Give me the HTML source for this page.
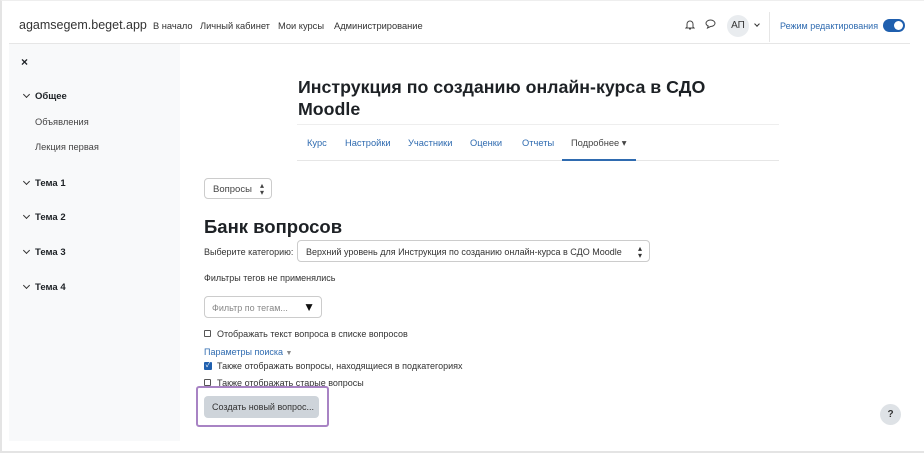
<!DOCTYPE html>
<html><head><meta charset="utf-8">
<style>
*{box-sizing:border-box;margin:0;padding:0}
body{width:924px;height:453px;background:#fff;font-family:"Liberation Sans","Noto Sans CJK SC",sans-serif;color:#1d2125;position:relative;overflow:hidden}
.frame{position:absolute;left:0;top:0;width:924px;height:453px;border-left:2px solid #e4e4e4;border-bottom:2px solid #e4e4e4;border-top:1px solid #eee}
.abs{position:absolute;white-space:nowrap}
.nav{position:absolute;left:9px;top:0;width:901px;height:44px;border-bottom:1px solid #e6e6e6}
.side{position:absolute;left:9px;top:44px;width:171px;height:397px;background:#f8f9fa}
.sm{font-size:9.3px}
.blue{color:#2f6bb0}
.sec{font-size:9.5px;font-weight:bold;color:#1d2125}
.chev{display:inline-block;width:5px;height:5px;border-right:1.5px solid #333;border-bottom:1.5px solid #333;transform:rotate(45deg)}
</style></head><body>
<div class="frame"></div>
<div class="nav"></div>
<div class="abs" style="left:19px;top:18px;font-size:12.5px;color:#333">agamsegem.beget.app</div>
<div class="abs sm" style="left:153px;top:21px;color:#333">В начало</div>
<div class="abs sm" style="left:200px;top:21px;color:#333">Личный кабинет</div>
<div class="abs sm" style="left:278px;top:21px;color:#333">Мои курсы</div>
<div class="abs sm" style="left:334px;top:21px;color:#333">Администрирование</div>
<svg class="abs" style="left:685px;top:19px" width="10" height="11" viewBox="0 0 10 11"><path d="M2 8V5a3 3 0 0 1 6 0v3l1 1H1z M4 10h2" fill="none" stroke="#444" stroke-width="1"/></svg>
<svg class="abs" style="left:705px;top:19px" width="11" height="10" viewBox="0 0 11 10"><path d="M5.5 1C8 1 10 2.5 10 4.3S8 7.5 5.5 7.5L2.5 9l.7-2C1.8 6.4 1 5.4 1 4.3 1 2.5 3 1 5.5 1z" fill="none" stroke="#444" stroke-width="1"/></svg>
<div class="abs" style="left:727px;top:15px;width:22px;height:22px;border-radius:50%;background:#e9ecef;font-size:10px;text-align:center;line-height:22px;color:#333">АП</div>
<span class="abs chev" style="left:755px;top:22px;width:4px;height:4px"></span>
<div class="abs" style="left:769px;top:12px;width:1px;height:30px;background:#e6e6e6"></div>
<div class="abs blue" style="left:780px;top:21px;font-size:9px">Режим редактирования</div>
<div class="abs" style="left:883px;top:19px;width:22px;height:13px;border-radius:7px;background:#1f5fae"><div style="position:absolute;right:2px;top:2px;width:9px;height:9px;border-radius:50%;background:#fff"></div></div>

<div class="side"></div>
<div class="abs" style="left:21px;top:55px;font-size:12px;font-weight:bold">×</div>
<span class="abs chev" style="left:24px;top:92px"></span><div class="abs sec" style="left:35px;top:91px">Общее</div>
<div class="abs sm" style="left:35px;top:117px;color:#444">Объявления</div>
<div class="abs sm" style="left:35px;top:142px;color:#444">Лекция первая</div>
<span class="abs chev" style="left:24px;top:179px"></span><div class="abs sec" style="left:35px;top:178px">Тема 1</div>
<span class="abs chev" style="left:24px;top:213px"></span><div class="abs sec" style="left:35px;top:212px">Тема 2</div>
<span class="abs chev" style="left:24px;top:248px"></span><div class="abs sec" style="left:35px;top:247px">Тема 3</div>
<span class="abs chev" style="left:24px;top:283px"></span><div class="abs sec" style="left:35px;top:282px">Тема 4</div>

<div class="abs" style="left:298px;top:76px;font-size:17.8px;font-weight:bold;line-height:22px">Инструкция по созданию онлайн-курса в СДО<br>Moodle</div>
<div class="abs" style="left:297px;top:124px;width:482px;height:1px;background:#eee"></div>
<div class="abs" style="left:297px;top:160px;width:482px;height:1px;background:#e6e6e6"></div>
<div class="abs sm blue" style="left:307px;top:138px">Курс</div>
<div class="abs sm blue" style="left:345px;top:138px">Настройки</div>
<div class="abs sm blue" style="left:408px;top:138px">Участники</div>
<div class="abs sm blue" style="left:470px;top:138px">Оценки</div>
<div class="abs sm blue" style="left:522px;top:138px">Отчеты</div>
<div class="abs sm" style="left:571px;top:138px;color:#444">Подробнее ▾</div>
<div class="abs" style="left:562px;top:159px;width:74px;height:2px;background:#2f6bb0"></div>

<div class="abs" style="left:204px;top:178px;width:68px;height:21px;border:1px solid #ccc;border-radius:4px;font-size:9.5px;color:#444;padding:5px 0 0 8px">Вопросы <span style="position:absolute;right:7px;top:3px;font-size:8px;line-height:7px">▴<br>▾</span></div>
<div class="abs" style="left:204px;top:216px;font-size:18.5px;font-weight:bold">Банк вопросов</div>
<div class="abs" style="left:204px;top:247px;font-size:9px;color:#333">Выберите категорию:</div>
<div class="abs" style="left:297px;top:240px;width:353px;height:22px;border:1px solid #ccc;border-radius:4px;font-size:9px;color:#333;padding:6px 0 0 8px">Верхний уровень для Инструкция по созданию онлайн-курса в СДО Moodle<span style="position:absolute;right:7px;top:4px;font-size:8px;line-height:7px;background:#fff">▴<br>▾</span></div>
<div class="abs" style="left:204px;top:273px;font-size:9px;color:#333">Фильтры тегов не применялись</div>
<div class="abs" style="left:204px;top:296px;width:118px;height:22px;border:1px solid #ccc;border-radius:4px;font-size:9px;color:#888;padding:6px 0 0 7px">Фильтр по тегам...<span style="position:absolute;right:6px;top:3px;font-size:12px;color:#111">▼</span></div>
<div class="abs" style="left:204px;top:330px;width:7px;height:7px;border:1px solid #555;border-radius:1px"></div>
<div class="abs" style="left:217px;top:329px;font-size:9px;color:#333">Отображать текст вопроса в списке вопросов</div>
<div class="abs blue" style="left:204px;top:347px;font-size:9px">Параметры поиска <span style="color:#888;font-size:7px">▼</span></div>
<div class="abs" style="left:204px;top:362px;width:8px;height:8px;background:#1f5fae;border-radius:1px;color:#fff;font-size:7px;line-height:8px;text-align:center">✓</div>
<div class="abs" style="left:217px;top:361px;font-size:9px;color:#333">Также отображать вопросы, находящиеся в подкатегориях</div>
<div class="abs" style="left:204px;top:379px;width:7px;height:7px;border:1px solid #555;border-radius:1px"></div>
<div class="abs" style="left:217px;top:378px;font-size:9px;color:#333">Также отображать старые вопросы</div>
<div class="abs" style="left:196px;top:386px;width:133px;height:41px;border:2px solid #a883c4;border-radius:3px"></div>
<div class="abs" style="left:204px;top:396px;width:115px;height:22px;background:#ced4da;border-radius:4px;font-size:9px;color:#333;padding:6px 0 0 8px">Создать новый вопрос...</div>
<div class="abs" style="left:880px;top:404px;width:21px;height:21px;border-radius:50%;background:#dee2e6;font-size:10px;font-weight:bold;text-align:center;line-height:21px;color:#333">?</div>
</body></html>
